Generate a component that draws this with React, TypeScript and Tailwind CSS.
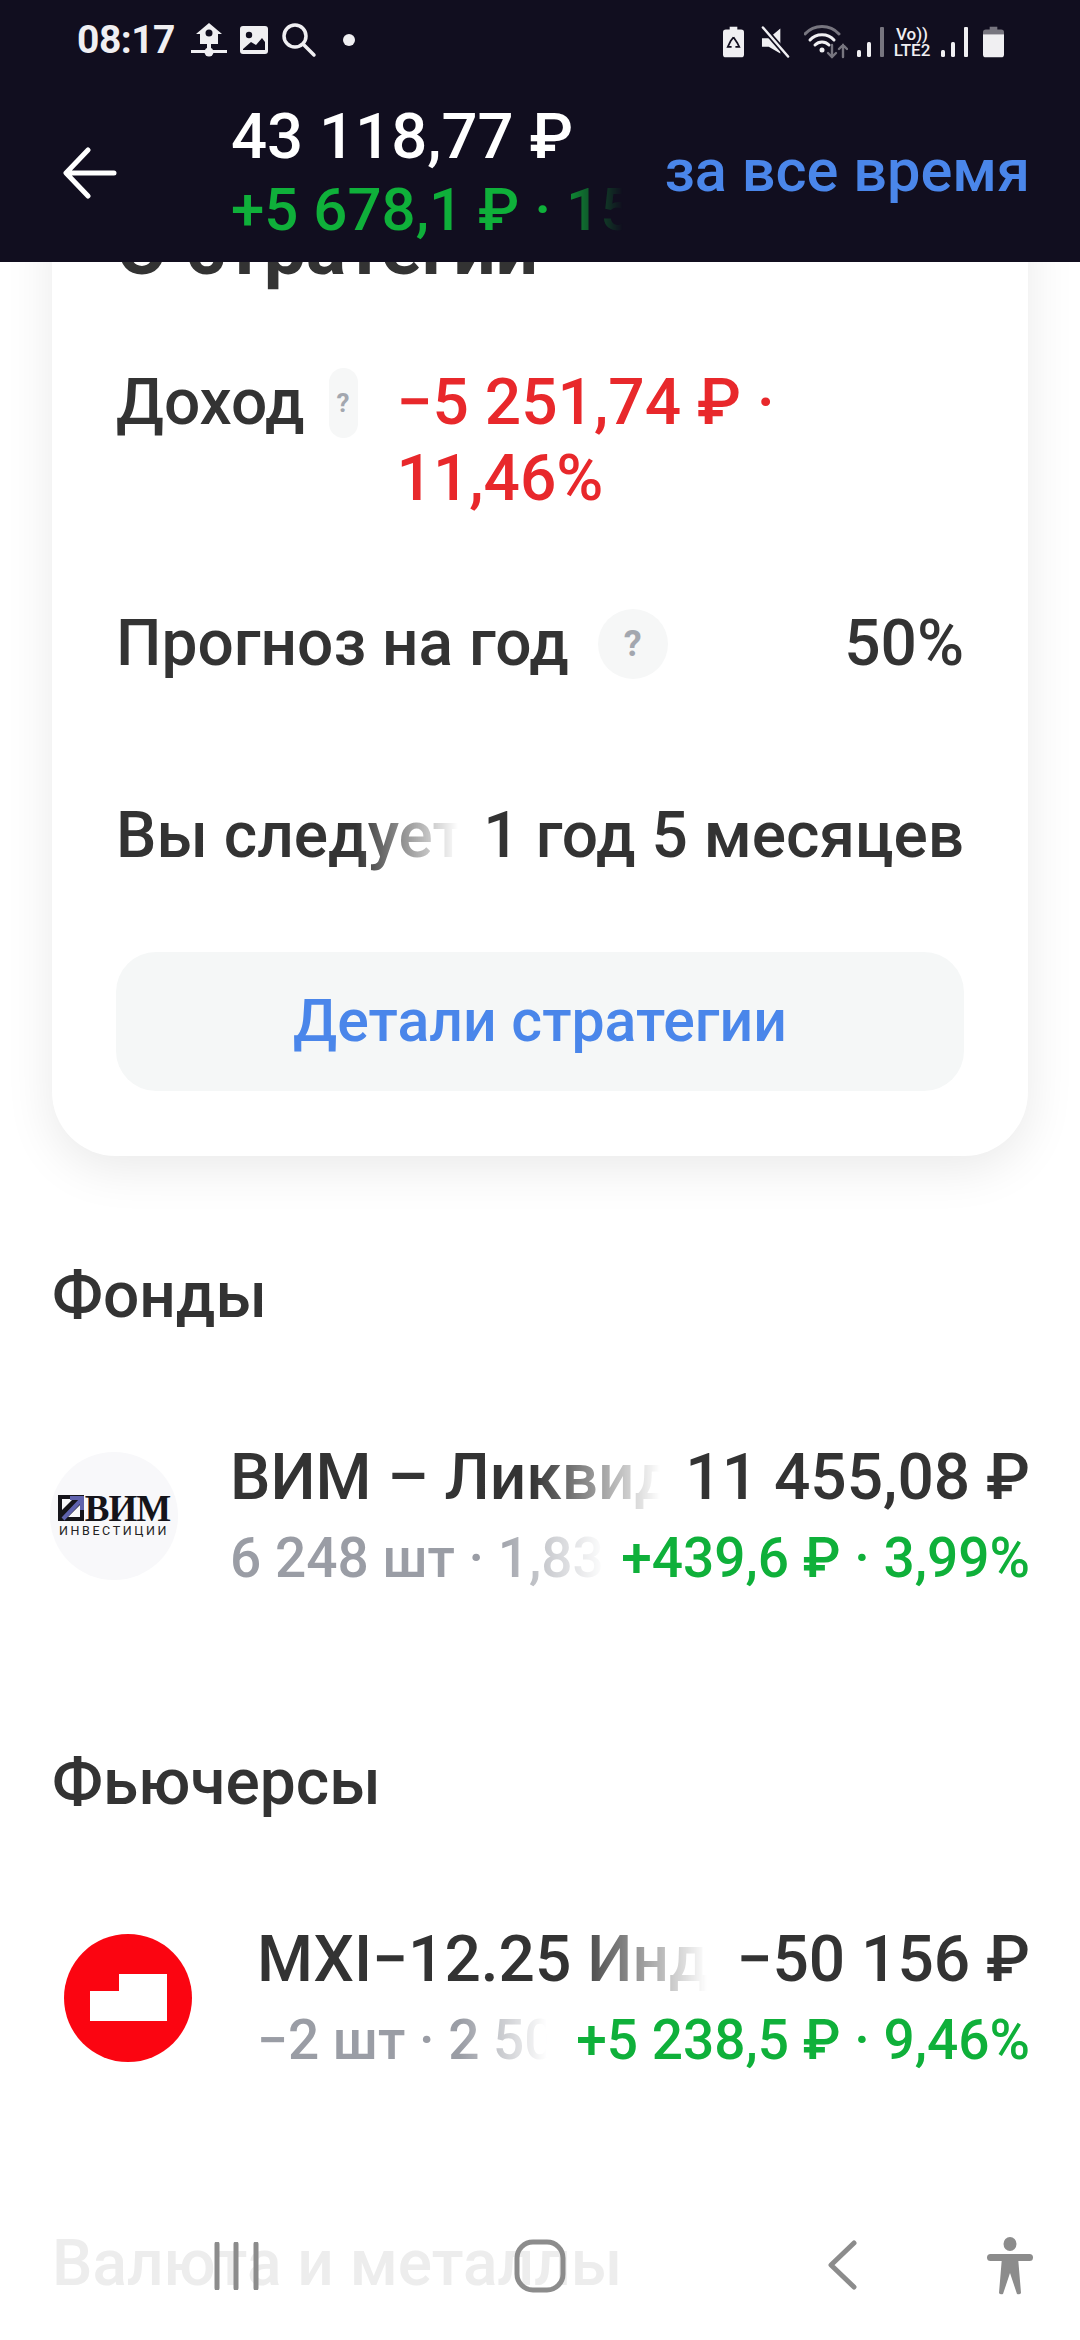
const fadeLabel = '[mask-image:linear-gradient(to_right,black_70%,transparent_100%)]'

function StatusLeft() {
  return (
    <div className="flex items-center">
      <span className="text-[39px] font-bold text-[#f0eff2] leading-none w-[97px] tracking-[-0.5px]">08:17</span>
      <svg className="ml-[16px]" width="38" height="36" viewBox="0 0 38 36" fill="none">
        <path d="M19 1 L32 12 H28 V22 H10 V12 H6 Z" fill="#f0eff2" />
        <circle cx="19" cy="11" r="3.5" fill="#110e1f" />
        <rect x="17" y="20" width="4" height="8" fill="#f0eff2" />
        <rect x="1" y="28" width="36" height="3" fill="#f0eff2" />
        <circle cx="19" cy="30" r="4.5" fill="#f0eff2" />
      </svg>
      <svg className="ml-[11px]" width="30" height="30" viewBox="0 0 30 30">
        <rect x="1" y="1" width="28" height="28" rx="3" fill="#f0eff2" />
        <circle cx="10" cy="10" r="3.2" fill="#110e1f" />
        <path d="M4 24 L12 17 L17 20 L23 13 L26 17 V25 H4 Z" fill="#110e1f" />
      </svg>
      <svg className="ml-[12px]" width="36" height="36" viewBox="0 0 36 36" fill="none" stroke="#f0eff2" strokeWidth="3.5" strokeLinecap="round">
        <circle cx="14" cy="14" r="11" />
        <path d="M23 23 L33 33" />
      </svg>
      <span className="ml-[26px] w-[12px] h-[12px] rounded-full bg-[#f0eff2]" />
    </div>
  )
}

function StatusRight() {
  return (
    <div className="flex items-center mt-[4px]">
      <svg width="21" height="32" viewBox="0 0 22 32" fill="none">
        <rect x="7" y="0" width="8" height="4" fill="#f0eff2" />
        <rect x="0" y="3" width="22" height="29" rx="3" fill="#f0eff2" />
        <path d="M11 11 L15 17 L17 21 H13 M9 21 H5 L8 15 L11 11" stroke="#110e1f" strokeWidth="1.8" />
      </svg>
      <svg className="ml-[17px]" width="29" height="32" viewBox="0 0 30 32" fill="none">
        <path d="M1 12 H8 L20 2 V28 L8 21 H1 Z" fill="#f0eff2" />
        <path d="M2 1 L28 31" stroke="#110e1f" strokeWidth="6" />
        <path d="M2 1 L28 31" stroke="#f0eff2" strokeWidth="2.6" strokeLinecap="round" />
      </svg>
      <svg className="ml-[14px]" width="44" height="34" viewBox="0 0 44 34" fill="none" strokeLinecap="round">
        <path d="M1 9 C10 -1 26 -1 35 9" stroke="#77757f" strokeWidth="3" />
        <path d="M6 15 C12 8 24 8 30 15" stroke="#f0eff2" strokeWidth="3" />
        <path d="M11 20 C15 16 21 16 25 20" stroke="#f0eff2" strokeWidth="3" />
        <circle cx="18" cy="25" r="2.5" fill="#f0eff2" />
        <path d="M28 20 V32 M24 28 L28 32 L32 28" stroke="#77757f" strokeWidth="2.4" />
        <path d="M39 32 V20 M35 24 L39 20 L43 24" stroke="#77757f" strokeWidth="2.4" />
      </svg>
      <svg className="ml-[9px]" width="27" height="30" viewBox="0 0 27 30">
        <rect x="0" y="23" width="4" height="7" rx="1.5" fill="#f0eff2" />
        <rect x="10" y="15" width="4" height="15" rx="1.5" fill="#f0eff2" />
        <rect x="23" y="0" width="4" height="30" rx="1" fill="#77757f" />
      </svg>
      <div className="ml-[8px] w-[40px] flex flex-col items-center text-[#f0eff2] font-medium leading-none">
        <span className="text-[17px] leading-[16px]">Vo))</span>
        <span className="text-[17px] leading-[16px]">LTE2</span>
      </div>
      <svg className="ml-[9px]" width="27" height="30" viewBox="0 0 27 30">
        <rect x="0" y="23" width="4" height="7" rx="1.5" fill="#f0eff2" />
        <rect x="10" y="15" width="4" height="15" rx="1.5" fill="#f0eff2" />
        <rect x="23" y="0" width="4" height="30" rx="1" fill="#f0eff2" />
      </svg>
      <svg className="ml-[15px]" width="21" height="32" viewBox="0 0 22 32">
        <rect x="7" y="0" width="8" height="4" fill="#77757f" />
        <path d="M0 6 Q0 3 3 3 H19 Q22 3 22 6 V8 H0 Z" fill="#77757f" />
        <path d="M0 8 H22 V29 Q22 32 19 32 H3 Q0 32 0 29 Z" fill="#f0eff2" />
      </svg>
    </div>
  )
}

function Header() {
  return (
    <header className="shrink-0 bg-[#110e1f] h-[262px] flex flex-col">
      <div className="h-[80px] pl-[77px] pr-[76px] flex items-center justify-between">
        <StatusLeft />
        <StatusRight />
      </div>
      <div className="flex items-start">
        <svg className="ml-[63px] mt-[67px] shrink-0" width="54" height="52" viewBox="0 0 54 52" fill="none" stroke="#ffffff" strokeWidth="5" strokeLinecap="round" strokeLinejoin="round">
          <path d="M51 26 H4 M25 3 L3 26 L25 49" />
        </svg>
        <div className="ml-[114px] mt-[20px] w-[392px] shrink-0">
          <div className="text-white text-[63.5px] leading-[74px] font-medium whitespace-nowrap">43 118,77 ₽</div>
          <div className="text-[#0fb03a] text-[60px] leading-[72px] font-medium whitespace-nowrap overflow-hidden [mask-image:linear-gradient(to_right,black_82%,transparent_100%)]">
            +5 678,1 ₽ · 15,16%
          </div>
        </div>
        <div className="ml-auto mr-[50px] mt-[51px] text-[#4a86ea] text-[59.5px] leading-[80px] font-medium whitespace-nowrap">за все время</div>
      </div>
    </header>
  )
}

function Hint({ wide }: { wide?: boolean }) {
  return (
    <span
      className={
        wide
          ? 'w-[70px] h-[70px] rounded-full bg-[#f6f7f7] flex items-center justify-center text-[#a3a7af] text-[36px] font-bold shrink-0'
          : 'w-[29px] h-[70px] rounded-full bg-[#f6f7f7] flex items-center justify-center text-[#a3a7af] text-[26px] font-bold shrink-0'
      }
    >
      ?
    </span>
  )
}

function StrategyCard() {
  return (
    <section className="mx-[52px] rounded-b-[64px] bg-white shadow-[0_12px_50px_rgba(0,0,0,0.09)] px-[64px] pb-[65px] -mt-[54px]">
      <h2 className="text-[75px] leading-[80px] font-bold text-[#333333] whitespace-nowrap">О стратегии</h2>

      <div className="mt-[77px] flex items-start">
        <span className="text-[#333333] text-[64px] leading-[76px] font-medium">Доход</span>
        <span className="ml-[24px] mt-[3px]">
          <Hint />
        </span>
        <span className="ml-[39px] text-[#e8282b] text-[64px] leading-[76px] font-medium w-[420px]">−5 251,74 ₽ · 11,46%</span>
      </div>

      <div className="mt-[89px] flex items-center">
        <span className="text-[#333333] text-[64px] leading-[76px] font-medium whitespace-nowrap">Прогноз на год</span>
        <span className="ml-[29px]">
          <Hint wide />
        </span>
        <span className="ml-auto text-[#333333] text-[64px] leading-[76px] font-medium">50%</span>
      </div>

      <div className="mt-[116px] flex items-center justify-between">
        <span className={`w-[342px] overflow-hidden whitespace-nowrap text-[#333333] text-[64px] leading-[76px] font-medium ${fadeLabel}`}>Вы следуете стратегии</span>
        <span className="text-[#333333] text-[64px] leading-[76px] font-medium whitespace-nowrap">1 год 5 месяцев</span>
      </div>

      <button className="mt-[78px] w-full h-[139px] rounded-[40px] bg-[#f5f7f7] text-[#4a86ea] text-[59px] font-medium">Детали стратегии</button>
    </section>
  )
}

function VimLogo() {
  return (
    <div className="w-[128px] h-[128px] rounded-full bg-[#f8f8fa] flex flex-col items-center justify-center shrink-0">
      <div className="flex items-center h-[27px]">
        <svg width="26" height="26" viewBox="0 0 26 26">
          <rect x="0" y="0" width="26" height="26" fill="#15141a" />
          <path d="M4 4 H15 L4 15 Z" fill="#f8f8fa" />
          <path d="M10 22 L22 10 V22 Z" fill="#f8f8fa" />
          <path d="M5 24 L23 5 M12 3 H24 V15" stroke="#5f62ad" strokeWidth="4" fill="none" />
        </svg>
        <span className="ml-[1px] text-[#15141a] text-[37px] leading-[27px] font-['Liberation_Serif',serif] font-bold tracking-[-1px]">ВИМ</span>
      </div>
      <span className="mt-[3px] text-[#222222] text-[12.5px] leading-[12px] tracking-[2.6px] whitespace-nowrap">ИНВЕСТИЦИИ</span>
    </div>
  )
}

function MoexLogo() {
  return (
    <div className="w-[128px] h-[128px] rounded-full bg-[#fb0511] flex items-center justify-center shrink-0">
      <svg width="77" height="47" viewBox="0 0 77 47">
        <path d="M0 17 H29 V0 H77 V47 H0 Z" fill="#ffffff" />
      </svg>
    </div>
  )
}

function Position({
  logo,
  name,
  amount,
  meta,
  profit,
  leftWidth,
  metaWidth,
}: {
  logo: React.ReactNode
  name: string
  amount: string
  meta: string
  profit: string
  leftWidth: string
  metaWidth: string
}) {
  return (
    <div className="flex items-center">
      {logo}
      <div className="flex-1 min-w-0">
        <div className="flex justify-between">
          <span className={`${leftWidth} overflow-hidden whitespace-nowrap text-[#333333] text-[64px] leading-[76px] font-medium ${fadeLabel}`}>{name}</span>
          <span className="text-[#333333] text-[64px] leading-[76px] font-medium whitespace-nowrap">{amount}</span>
        </div>
        <div className="flex justify-between mt-[9px]">
          <span className={`${metaWidth} overflow-hidden whitespace-nowrap text-[#9a9da5] text-[55px] leading-[66px] font-medium ${fadeLabel}`}>{meta}</span>
          <span className="text-[#0fb03a] text-[55px] leading-[66px] font-medium whitespace-nowrap">{profit}</span>
        </div>
      </div>
    </div>
  )
}

function BottomNav() {
  return (
    <div className="absolute left-0 right-0 bottom-0 h-[140px] pointer-events-none">
      <svg className="absolute left-[213px] top-[42px]" width="48" height="48" viewBox="0 0 48 48" fill="none" stroke="#8c8c8c" strokeWidth="5" strokeLinecap="round">
        <path d="M4 2 V46 M23 2 V46 M43 2 V46" />
      </svg>
      <svg className="absolute left-[514px] top-[39px]" width="52" height="54" viewBox="0 0 52 54" fill="none" stroke="#8c8c8c" strokeWidth="5">
        <rect x="3" y="3" width="46" height="48" rx="16" />
      </svg>
      <svg className="absolute left-[826px] top-[40px]" width="32" height="50" viewBox="0 0 32 50" fill="none" stroke="#8c8c8c" strokeWidth="5" strokeLinecap="round" strokeLinejoin="round">
        <path d="M28 3 L5 25 L28 47" />
      </svg>
      <svg className="absolute left-[986px] top-[37px]" width="48" height="58" viewBox="0 0 48 58" fill="#8c8c8c">
        <ellipse cx="24" cy="7" rx="6.5" ry="7" />
        <rect x="1" y="17" width="46" height="7" rx="3.5" />
        <path d="M16 20 H32 L35 56 Q34 58 31 57 L24 36 L17 57 Q14 58 13 56 Z" />
      </svg>
    </div>
  )
}

export default function App() {
  return (
    <div className="relative w-[1080px] h-[2340px] overflow-hidden bg-white flex flex-col font-['Roboto','Noto_Sans',sans-serif]">
      <Header />
      <main className="flex-1 overflow-hidden">
        <StrategyCard />

        <h3 className="mt-[104px] ml-[52px] text-[#333333] text-[64px] leading-[72px] font-medium">Фонды</h3>
        <div className="mt-[108px] mx-[50px] -mb-[4px]">
          <Position
            logo={<VimLogo />}
            name="ВИМ – Ликвидность"
            amount="11 455,08 ₽"
            meta="6 248 шт · 1,83 ₽"
            profit="+439,6 ₽ · 3,99%"
            leftWidth="w-[430px] ml-[52px]"
            metaWidth="w-[375px] ml-[52px]"
          />
        </div>

        <h3 className="mt-[160px] ml-[52px] text-[#333333] text-[64px] leading-[72px] font-medium">Фьючерсы</h3>
        <div className="mt-[103px] ml-[64px] mr-[50px]">
          <Position
            logo={<MoexLogo />}
            name="MXI−12.25 Индекс"
            amount="−50 156 ₽"
            meta="−2 шт · 2 507,8 ₽"
            profit="+5 238,5 ₽ · 9,46%"
            leftWidth="w-[450px] ml-[65px]"
            metaWidth="w-[290px] ml-[65px]"
          />
        </div>

        <h3 className="mt-[155px] ml-[52px] text-[#ededed] text-[64px] leading-[72px] font-medium whitespace-nowrap">Валюта и металлы</h3>
      </main>
      <BottomNav />
    </div>
  )
}
